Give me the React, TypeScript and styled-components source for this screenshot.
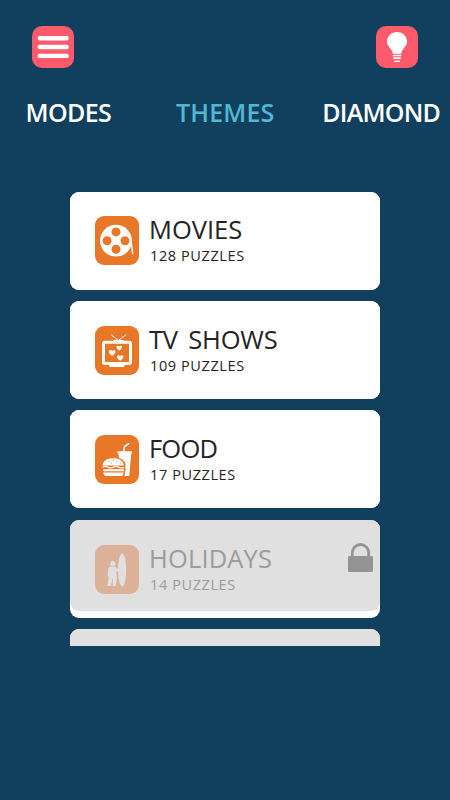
import React from "react";
import styled, { createGlobalStyle } from "styled-components";

const GlobalStyle = createGlobalStyle`
  * { box-sizing: border-box; }
  body { margin: 0; background: #11405e; }
`;

const Screen = styled.main`
  width: 450px;
  height: 800px;
  background: #11405e;
  font-family: "Open Sans", "Noto Sans", sans-serif;
  overflow: hidden;
`;

const TopBar = styled.header`
  display: flex;
  justify-content: space-between;
  padding: 26px 32px 0;
`;

const SquareButton = styled.button`
  width: 42px;
  height: 42px;
  padding: 0;
  border: 0;
  border-radius: 10px;
  background: #ff5a6c;
  svg { display: block; }
`;

const Tabs = styled.nav`
  display: grid;
  grid-template-columns: 150px 147px 153px;
  margin-top: 26px;
`;

const Tab = styled.span<{ $active?: boolean; $indent: number; $spacing: number }>`
  padding-left: ${(p) => p.$indent}px;
  font-size: 25px;
  line-height: 36px;
  font-weight: 600;
  white-space: nowrap;
  letter-spacing: ${(p) => p.$spacing}px;
  color: ${(p) => (p.$active ? "#4fb9d3" : "#ffffff")};
`;

const List = styled.section`
  display: flex;
  flex-direction: column;
  gap: 11.4px;
  width: 310px;
  height: 454px;
  margin: 61.7px 0 0 70px;
  overflow: hidden;
`;

const Card = styled.article`
  flex: none;
  height: 98px;
  border-radius: 9px;
  background: #ffffff;
`;

const CardBody = styled.div<{ $locked?: boolean }>`
  display: flex;
  height: ${(p) => (p.$locked ? 91.5 : 98)}px;
  padding: 24.8px 7px 0 25px;
  border-radius: 9px;
  background: ${(p) => (p.$locked ? "#e0e0e0" : "#ffffff")};
`;

const IconTile = styled.div<{ $locked?: boolean }>`
  flex: none;
  width: 44px;
  height: 49px;
  border-radius: 9px;
  background: ${(p) => (p.$locked ? "#dbb297" : "#e97728")};
  svg { display: block; }
`;

const Labels = styled.div<{ $locked?: boolean }>`
  flex: 1;
  padding-left: 10px;
  color: ${(p) => (p.$locked ? "#9c9c9c" : "#242424")};
`;

const Title = styled.h2<{ $spacing: number; $wordSpacing?: number }>`
  margin: -4px 0 0;
  font-size: 25.5px;
  line-height: 34px;
  font-weight: 400;
  white-space: nowrap;
  letter-spacing: ${(p) => p.$spacing}px;
  word-spacing: ${(p) => p.$wordSpacing ?? 0}px;
`;

const Count = styled.p<{ $spacing: number }>`
  margin: 0;
  padding-left: 1px;
  font-size: 14.5px;
  line-height: 20px;
  white-space: nowrap;
  letter-spacing: ${(p) => p.$spacing}px;
`;

const LockSlot = styled.div`
  flex: none;
  width: 25px;
  svg { display: block; margin-top: -1.5px; }
`;

const MenuIcon = () => (
  <svg width="42" height="42" viewBox="0 0 42 42" stroke="#fff" strokeWidth="4.4" strokeLinecap="round">
    <path d="M7.8 12.2H34.6M7.8 21H34.6M7.8 29.9H34.6" />
  </svg>
);

const BulbIcon = () => (
  <svg width="42" height="42" viewBox="0 0 42 42" fill="#fff">
    <path d="M21 6C15.3 6 11 10.2 11 15.5c0 5.5 5.400 7.300 5.800 12.300h8.400c.4-5 5.800-6.800 5.800-12.300C31 10.200 26.700 6 21 6Z" />
    <path d="M16.800 28.700h8.400v1.500h-8.400zM17.200 31.300h7.600v1.800h-7.600zM18.200 34.400h5.600v1.700h-5.600z" />
  </svg>
);

const FilmIcon = () => (
  <svg width="44" height="49" viewBox="0 0 44 49">
    <circle cx="21" cy="24.700" r="15.900" fill="#fff" />
    <path d="M35.800 23.500L37.700 37.600" stroke="#fff" strokeWidth="1.400" strokeLinecap="round" />
    <g fill="#e97728">
      <circle cx="21" cy="15.900" r="4.500" />
      <circle cx="21" cy="33.300" r="4.500" />
      <circle cx="12.100" cy="24.700" r="4.500" />
      <circle cx="30" cy="24.700" r="4.500" />
    </g>
  </svg>
);

const Heart = ({ x, y, s }: { x: number; y: number; s: number }) => (
  <path
    transform={`translate(${x} ${y}) scale(${s})`}
    d="M0 3C-1.500 1.700-3.300.4-3.300-1.300-3.300-3.300-.9-3.600 0-1.900.9-3.600 3.300-3.300 3.300-1.300 3.300.4 1.500 1.700 0 3Z"
    fill="#fff"
  />
);

const TvIcon = () => (
  <svg width="44" height="49" viewBox="0 0 44 49">
    <path d="M16.300 8.800L23.200 14.500 31.300 8.500" fill="none" stroke="#fff" strokeWidth="1" />
    <path d="M17.500 16.200C18 13.800 20.500 13.800 23.500 13.800S29 13.800 29.800 16.200Z" fill="#fff" />
    <rect x="8.500" y="16.300" width="27" height="21.200" rx="1.500" fill="none" stroke="#fff" strokeWidth="3" />
    <path d="M14.200 38h15.300v1.800q0 1.200-1.200 1.200H15.400q-1.200 0-1.200-1.200Z" fill="#fff" />
    <Heart x={24.200} y={22.200} s={0.85} />
    <Heart x={17.200} y={27.100} s={1} />
    <Heart x={25.200} y={32} s={0.95} />
  </svg>
);

const FoodIcon = () => (
  <svg width="44" height="49" viewBox="0 0 44 49" fill="#fff">
    <path d="M22.400 16.200H37v2.300h-.8L34.300 41h-5.100c1.300-2 1.100-3.200.2-4.100 2-1.200 1.600-3.200.7-4 1.800-4.400-1.200-8.400-6.100-9.900l-.6-4.500h-1Z" />
    <path d="M28.700 16.500L29.500 11.500 33.800 8.700" fill="none" stroke="#fff" strokeWidth="1.500" strokeLinecap="round" />
    <path d="M7.600 30.500C7.600 26 12.300 23.300 18.100 23.300S28.700 26 28.700 30.500Z" />
    <path d="M7.500 32.200q2.700-1.500 5.400 0t5.400 0 5.400 0 5.400 0" fill="none" stroke="#fff" strokeWidth="1.300" />
    <path d="M8.400 34.300h20.500q.8 1.300-.3 2H8.600q-1.300-1-.2-2ZM8.400 37.400h20.100c.1 2.400-1 3.600-3.300 3.600H12c-2.400 0-3.600-1.200-3.600-3.600Z" />
    <path d="M13.700 26.300h1.200M17.700 25.100h1.200M21.400 26.300h1.200M16 28h1.200M24.700 28h1.100" stroke="#e97728" strokeWidth=".8" />
  </svg>
);

const SurferIcon = () => (
  <svg width="44" height="49" viewBox="0 0 44 49" fill="#e0e0e0">
    <ellipse cx="27.100" cy="24.900" rx="4.100" ry="16.500" />
    <circle cx="17.900" cy="18.700" r="2.700" />
    <path d="M14.800 21.800h5.600l3.600 3.100v2.300L21.300 26 21.800 33.300 20.600 41h-3v-1.200l.4-6h-.6L15.900 41h-3.500v-1.200l1.300-6.400v-1.800h-1.200l.8-8.200Z" />
  </svg>
);

const LockIcon = () => (
  <svg width="25" height="30" viewBox="0 0 25 30">
    <path d="M4.300 14V9.700a8.200 8.200 0 0 1 16.400 0V14" fill="none" stroke="#949494" strokeWidth="2.800" />
    <rect y="13" width="25" height="16" rx="1.200" fill="#949494" />
  </svg>
);

const themes = [
  { title: "MOVIES", count: "128 PUZZLES", icon: <FilmIcon />, spacing: 0, countSpacing: 0.6 },
  { title: "TV SHOWS", count: "109 PUZZLES", icon: <TvIcon />, spacing: -0.2, wordSpacing: 4, countSpacing: 0.6 },
  { title: "FOOD", count: "17 PUZZLES", icon: <FoodIcon />, spacing: -0.8, countSpacing: 0.6 },
  { title: "HOLIDAYS", count: "14 PUZZLES", icon: <SurferIcon />, spacing: 0.15, countSpacing: 0.6, locked: true },
];

export default function App() {
  return (
    <Screen>
      <GlobalStyle />
      <TopBar>
        <SquareButton aria-label="Menu"><MenuIcon /></SquareButton>
        <SquareButton aria-label="Hint"><BulbIcon /></SquareButton>
      </TopBar>
      <Tabs>
        <Tab $indent={25.5} $spacing={-0.6}>MODES</Tab>
        <Tab $indent={26} $spacing={0.15} $active>THEMES</Tab>
        <Tab $indent={25.3} $spacing={-0.75}>DIAMOND</Tab>
      </Tabs>
      <List>
        {themes.map((t) => (
          <Card key={t.title}>
            <CardBody $locked={t.locked}>
              <IconTile $locked={t.locked}>{t.icon}</IconTile>
              <Labels $locked={t.locked}>
                <Title $spacing={t.spacing} $wordSpacing={t.wordSpacing}>{t.title}</Title>
                <Count $spacing={t.countSpacing}>{t.count}</Count>
              </Labels>
              {t.locked && <LockSlot><LockIcon /></LockSlot>}
            </CardBody>
          </Card>
        ))}
        <Card><CardBody $locked /></Card>
      </List>
    </Screen>
  );
}
